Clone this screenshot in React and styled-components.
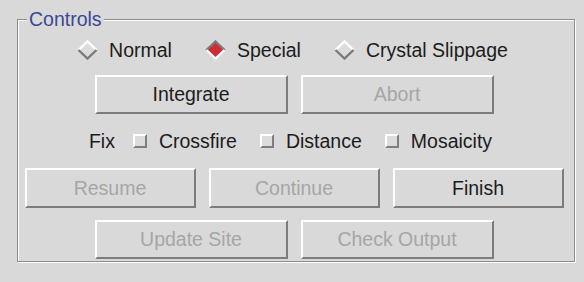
import React from "react";
import styled, { createGlobalStyle } from "styled-components";

const Global = createGlobalStyle`
  html, body {
    margin: 0;
    background: #d9d9d9;
  }
  body {
    font-family: "Liberation Sans", Arial, sans-serif;
    font-size: 19.5px;
    color: #1c1c1c;
  }
`;

const Page = styled.div`
  width: 584px;
  height: 282px;
  box-sizing: border-box;
  padding: 8px 0 0 17px;
`;

const Frame = styled.fieldset`
  box-sizing: border-box;
  width: 558px;
  height: 254px;
  margin: 0;
  padding: 7px 0 0 0;
  border: 1px solid #8c8c8c;
  box-shadow: inset 1px 1px 0 #fff, 1px 1px 0 #fff;
  display: flex;
  flex-direction: column;
  align-items: center;
`;

const Title = styled.legend`
  margin-left: 9px;
  padding: 0 2px;
  line-height: 22px;
  color: #3b4894;
  background: #d9d9d9;
  position: relative;
`;

const Row = styled.div`
  display: flex;
  align-items: center;
  justify-content: center;
  gap: ${({ $gap }) => $gap}px;
  height: ${({ $h }) => $h || 26}px;
  margin-left: ${({ $shift }) => $shift || 0}px;
  margin-top: ${({ $top }) => $top || 0}px;
`;

const Option = styled.label`
  display: flex;
  align-items: center;
  gap: ${({ $gap }) => $gap}px;
  line-height: 26px;
  margin-right: ${({ $mr }) => $mr || 0}px;
`;

const Box = styled.span`
  box-sizing: border-box;
  width: 14px;
  height: 14px;
  border: 2px solid;
  border-color: #fff #7d7d7d #7d7d7d #fff;
  background: #dcdcdc;
`;

const Button = styled.button`
  box-sizing: border-box;
  width: ${({ $w }) => $w}px;
  height: 100%;
  padding: 0;
  background: #d9d9d9;
  border: 2px solid;
  border-color: #fff #7c7c7c #7c7c7c #fff;
  font-family: inherit;
  font-size: 19.5px;
  color: ${({ disabled }) => (disabled ? "#a6a6a6" : "#1c1c1c")};
`;

const Diamond = ({ on }) => (
  <svg width="21" height="20" viewBox="0 0 21 20">
    <polygon
      points="10.5,0.5 20.5,10 10.5,19.5 0.5,10"
      fill={on ? "#cf2c33" : "#dcdcdc"}
    />
    <polyline
      points="1.5,10 10.5,1.5 19.5,10"
      fill="none"
      stroke={on ? "#7a7a7a" : "#fff"}
      strokeWidth="2.4"
    />
    <polyline
      points="1.5,10 10.5,18.5 19.5,10"
      fill="none"
      stroke={on ? "#fff" : "#7a7a7a"}
      strokeWidth="2.4"
    />
  </svg>
);

const App = () => {
  const modes = [
    ["Normal", false],
    ["Special", true],
    ["Crystal Slippage", false],
  ];
  const fixes = ["Crossfire", "Distance", "Mosaicity"];

  return (
    <>
      <Global />
      <Page>
        <Frame>
          <Title>Controls</Title>
          <Row $gap={33} $shift={-7}>
            {modes.map(([name, on]) => (
              <Option key={name} $gap={11}>
                <Diamond on={on} />
                {name}
              </Option>
            ))}
          </Row>
          <Row $gap={13} $h={39} $shift={-4} $top={12}>
            <Button $w={193}>Integrate</Button>
            <Button $w={193} disabled>
              Abort
            </Button>
          </Row>
          <Row $gap={23} $shift={-11} $top={14}>
            <Option $gap={0} $mr={-5}>
              Fix
            </Option>
            {fixes.map((f) => (
              <Option key={f} $gap={12}>
                <Box />
                {f}
              </Option>
            ))}
          </Row>
          <Row $gap={13} $h={40} $shift={-4} $top={14}>
            <Button $w={171} disabled>
              Resume
            </Button>
            <Button $w={171} disabled>
              Continue
            </Button>
            <Button $w={171}>Finish</Button>
          </Row>
          <Row $gap={13} $h={39} $shift={-4} $top={12}>
            <Button $w={193} disabled>
              Update Site
            </Button>
            <Button $w={193} disabled>
              Check Output
            </Button>
          </Row>
        </Frame>
      </Page>
    </>
  );
};

export default App;
